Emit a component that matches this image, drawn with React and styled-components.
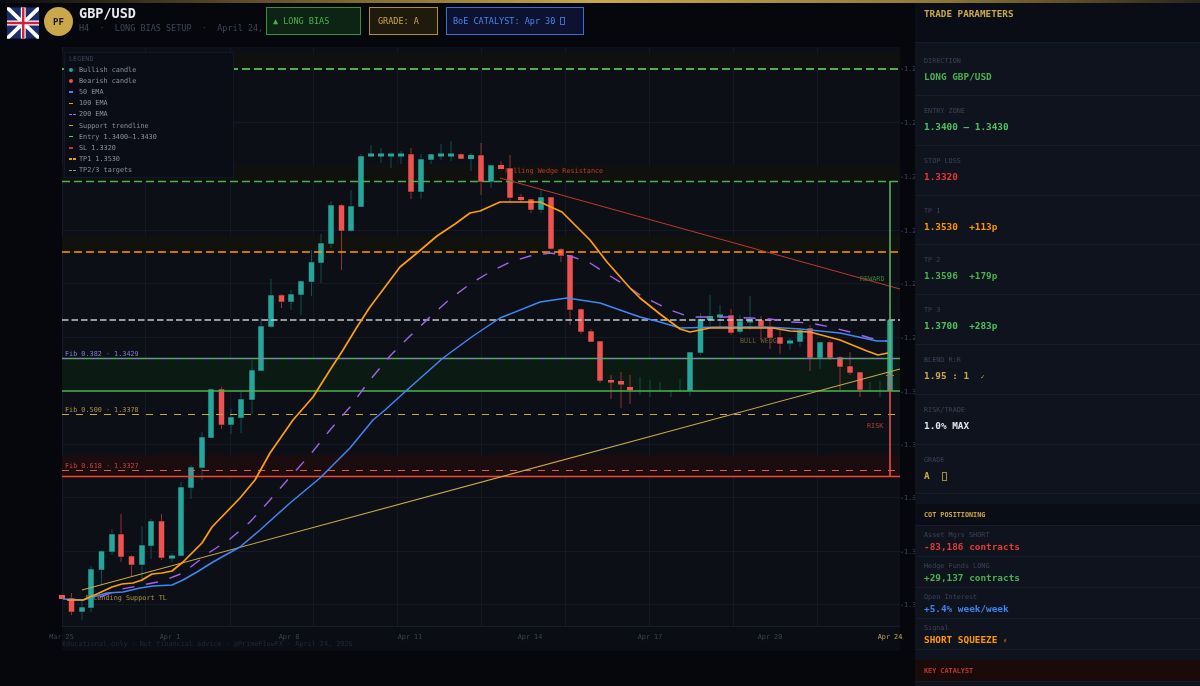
import React from "react";
import styled, { createGlobalStyle } from "styled-components";

const MONO = `"DejaVu Sans Mono", "Liberation Mono", monospace`;

const Global = createGlobalStyle`
  html, body { margin: 0; padding: 0; background: #05070d; }
  * { box-sizing: border-box; }
`;

const Page = styled.div`
  width: 1200px; height: 686px; overflow: hidden; display: flex; flex-direction: column;
  background: #05070d; font-family: ${MONO}; filter: blur(0.3px);
`;
const GoldBar = styled.div`
  height: 3px; flex: none;
  background: linear-gradient(90deg, #0a0c10 0%, #6d5c2e 25%, #c9a84c 50%, #8f7838 78%, #2a261c 100%);
`;
const Body = styled.div`display: flex; flex: 1; min-height: 0;`;
const Main = styled.main`width: 915px; flex: none; overflow: hidden; display: flex; flex-direction: column;`;
const Header = styled.header`height: 44px; flex: none; display: flex; align-items: flex-start; padding: 4px 0 0 6.5px;`;
const Flag = styled.svg`width: 32.5px; height: 32px; flex: none; display: block;`;
const Coin = styled.div`
  width: 29px; height: 29px; margin-left: 5px; flex: none; border-radius: 50%; background: #c9a84c; color: #1a1405;
  font-size: 9px; font-weight: 700; display: flex; align-items: center; justify-content: center;
`;
const TitleBlock = styled.div`width: 187px; margin: -2px 0 0 6px; flex: none; white-space: pre;`;
const Title = styled.div`font-size: 13.5px; font-weight: 700; color: #e8eaf0; line-height: 16px;`;
const Sub = styled.div`font-size: 8.5px; color: #3f4759; line-height: 11px; margin-top: 1.5px;`;
const Badge = styled.div`
  height: 28px; width: ${p => p.$w}px; margin-right: ${p => p.$mr}px; flex: none; padding-left: ${p => p.$pl}px; padding-bottom: 1px;
  display: flex; align-items: center; white-space: pre; font-size: 8.5px;
  color: ${p => p.$color}; background: ${p => p.$bg}; border: 1px solid ${p => p.$border};
`;
const Tofu = styled.span`
  display: inline-block; width: 5px; height: ${p => p.$h}px; margin-left: ${p => p.$ml ?? 0}px; border: 1px solid currentColor;
  vertical-align: middle; opacity: 0.8;
`;

const ChartFrame = styled.div`position: relative; width: 915px; height: 604px; flex: none;`;
const ChartSvg = styled.svg`display: block; width: 915px; height: 604px;`;
const Label = styled.text`
  font-family: ${MONO}; font-size: 6.8px; fill: ${p => p.$color}; opacity: ${p => p.$op ?? 1};
  text-anchor: ${p => p.$anchor ?? "start"};
`;
const Legend = styled.aside`
  position: absolute; left: 64px; top: 5px; width: 170px; height: 126px; padding: 1px 0 0 4px;
  background: #0a0d15; border: 1px solid #131826;
`;
const LegendTitle = styled.div`font-size: 6.8px; line-height: 10px; color: #3a4256;`;
const LegendRow = styled.div`display: flex; align-items: center; height: 11.2px; font-size: 6.8px; color: #8a909c;`;
const LegendMark = styled.span`width: 10px; flex: none; display: flex; justify-content: flex-start; align-items: center;`;
const Dot = styled.i`width: 4px; height: 4px; border-radius: 50%; background: ${p => p.$color};`;
const Dash = styled.i`width: ${p => p.$dashed ? 7 : 4}px; height: 1.3px; background: ${p => p.$dashed
  ? `repeating-linear-gradient(90deg, ${p.$color} 0 3px, transparent 3px 4px)` : p.$color};`;
const Footnote = styled.div`position: absolute; left: 62px; top: 592px; font-size: 6.8px; line-height: 10px; color: #232838; white-space: pre;`;

const Side = styled.aside`flex: 1; background: #0f131d; display: flex; flex-direction: column; min-width: 0;`;
const SideHead = styled.div`
  height: 40px; flex: none; padding: 5px 9px 0; background: #0a0d16; border-bottom: 1px solid #171c2a;
  font-size: 9.3px; line-height: 11px; font-weight: 700; color: #c9a84c;
`;
const Param = styled.div`
  height: ${p => p.$h ?? 49.8}px; flex: none; padding: ${p => p.$pt ?? 10}px 9px 0; border-bottom: 1px solid #171c2a;
`;
const ParamLabel = styled.div`font-size: 6.8px; line-height: 10px; color: #3a4256;`;
const ParamValue = styled.div`font-size: 9.4px; line-height: 12px; margin-top: 5px; font-weight: 700; color: ${p => p.$color}; white-space: pre;`;
const SectionHead = styled.div`
  height: 22px; flex: none; margin-top: ${p => p.$mt}px; padding: 0 9px; display: flex; align-items: center;
  font-size: 6.8px; font-weight: 700; color: ${p => p.$color}; background: ${p => p.$bg}; border-bottom: 1px solid #171c2a;
`;
const CotRow = styled.div`height: 31px; flex: none; padding: 4px 9px 0; border-bottom: 1px solid #171c2a;`;
const CotValue = styled.div`font-size: 9.4px; line-height: 12px; margin-top: 1px; font-weight: 700; color: ${p => p.$color}; white-space: pre;`;
const SmallGlyph = styled.span`font-size: 7px; font-weight: 400;`;

const G = "#26a69a", R = "#ef5350";
// x-centre, body top y, body bottom y, wick high y, wick low y, colour
const candles = [
  [62,595,599,595,599,R],[71.5,598,612,593,615,R],[82,607,612,600,620,G],[91,569,608,566,612,G],[101.5,551,570,550,585,G],
  [112,534,552,529,555,G],[121,534,557,514,562,R],[131.5,556,565,555,576,R],[142,545,565,526,582,G],[151,521,546,519,559,G],
  [161.5,521,558,514,560,R],[172,555.5,558.5,553,562,G],[181,487,556,482,556,G],[191,467,488,465,499,G],[202,437,468,432,480,G],
  [211,389,438,388,438,G],[221.5,389,425,387,429,R],[231,417,425,409,434,G],[241,399,418,392,433,G],[252,370,400,360,414,G],
  [261,326,371,318,371,G],[271,295,327,279,328,G],[281.5,295,302,294,308,R],[291,294,302,290,310,G],[301,281,295,281,315,G],
  [311.5,262,282,250,296,G],[321,243,263,234,283,G],[331,205,244,201,248,G],[341.5,205,231,204,270,R],[351,206,231,190,232,G],
  [361,156,207,154,207,G],[371,153.5,156.5,145,157,G],[381,153.5,156.5,148,163,G],[391,153.5,156.5,154,168,G],[401,153.5,156.5,151,164,G],
  [411,154,192,148,199,R],[421,159,192,154,199,G],[431,154,160,154,164,G],[441,153.5,156.5,144,160,G],[451,153.5,156.5,141,161,G],
  [461,154,159,153,159,R],[471,155,159,153,171,G],[481,155,182,143,195,R],[491,165,182,165,188,G],[501,165,169,161,169,R],
  [510,168,198,155,202,R],[521,197,200,194,203,R],[531,199,210,199,213,R],[541,197,210,190,213,G],[551,197,249,197,250,R],
  [561,249,256,248,262,R],[570,255,310,255,325,R],[581,309,332,308,334,R],[591,331,342,329,342,R],[600,341,381,341,383,R],
  [611,380,382.5,375,399,R],[621,381,384.5,372,408,R],[630,387,390,375,404,R],
  [640,391,391,377,395,G],[650,391,391,380,397,G],[660,391,391,382,392,G],[671,391,391,390,397,G],[680,391,391,379,392,G],
  [690,352,391,352,396,G],[700.5,319,353,313,355,G],[710,316,320,295,325,G],[720,314.5,317.5,305,327,G],[731,315,333,309,335,R],
  [740,321,332,315,334,G],[750,319.5,322.5,296,330,G],[761,320,327,316,340,R],[770,327,338,320,349,R],[780,337,344,330,354,R],
  [790,340.5,343.5,338,350,G],[800,330,342,328,347,G],[810,328,358,325,371,R],[820,342,358,342,369,G],[830,342,358,340,360,R],
  [840,357,367,356,390,R],[850,366,373,352,375,R],[860,372,390,372,397,R],[870,391,391,382,392,G],[880,391,391,381,397,G],
  [890,320,391,320,391,G],
];

const ema100 = "67,600 83,600 97,594 112,587 122,584 133,583 142,580 152,574 162,573 172,571 183,562 202,543 212,527 240,498 255,480 270,453 293,420 313,397 330,370 343,350 357,327 370,307 385,287 400,267 417,253 437,236 455,224 470,213 480,211 500,202 540,202 562,212 590,240 607,262 630,288 640,298 660,314 680,329 690,332 710,328 740,328 773,328 790,331 810,332 840,340 867,351 878,355 888,353";
const ema50 = "63,599 83,600 93,597 107,593 123,592 140,588 153,586 172,585 183,580 197,572 213,562 240,547 260,530 290,503 320,478 350,448 373,420 385,410 407,390 443,358 473,336 500,318 540,302 567,298 600,303 640,317 660,322 680,328 720,327 767,327 800,329 840,333 877,341 888,341";
const ema200 = "100,597 122,589 163,581 183,573 210,552 230,539 250,522 270,500 290,477 310,455 330,430 350,407 370,380 390,356 410,336 430,317 450,299 470,284 490,272 510,262 530,256 550,253 570,256 590,263 610,276 630,288 640,295 670,310 690,317 710,317 730,317 750,318 770,319 790,322 810,323 830,327 850,332 870,338 887,341";

const vGrid = [145, 230, 313, 397, 481, 565, 649, 733, 817];
const ticks = [68.5, 122, 176, 230, 283, 337, 391, 444, 497.5, 551, 604.5];
const tickText = ticks.map((_, i) => (i < 6 ? "-1.2" : "-1.3"));
const dates = [["Mar 25", 61.5], ["Apr 1", 170], ["Apr 8", 289], ["Apr 11", 410], ["Apr 14", 530], ["Apr 17", 650], ["Apr 20", 770], ["Apr 24", 890]];

function Chart() {
  return (
    <ChartSvg viewBox="0 47 915 604">
      <rect x="62" y="47" width="838" height="604" fill="#0a0d13" />
      <rect x="62" y="47" width="838" height="579" fill="#0c0f16" />
      {vGrid.map(x => <line key={x} x1={x + 0.5} x2={x + 0.5} y1="47" y2="626" stroke="#141925" />)}
      {ticks.map(y => <line key={y} x1="62" x2="900" y1={Math.floor(y) + 0.5} y2={Math.floor(y) + 0.5} stroke="#141925" />)}
      <line x1="62.5" x2="62.5" y1="47" y2="626" stroke="#171c2a" />
      <line x1="62" x2="900" y1="626.5" y2="626.5" stroke="#171c2a" />
      {ticks.map((y, i) => <Label key={y} x="900" y={y + 2.5} $color="#3f4759">{tickText[i]}</Label>)}
      {dates.map(([t, x]) => <Label key={t} x={x} y="639" $anchor="middle" $color={t === "Apr 24" ? "#c9a84c" : "#3a4256"}>{t}</Label>)}

      <rect x="62" y="53" width="838" height="16" fill="#10110e" />
      <rect x="62" y="165" width="838" height="16" fill="#10110e" />
      <rect x="62" y="236" width="838" height="16" fill="#11110d" />
      <rect x="62" y="358" width="838" height="33" fill="#0c1a14" />
      <rect x="62" y="455" width="838" height="21" fill="#1b0c0f" />

      <Label x="505" y="173" $color="#c0392b">Falling Wedge Resistance</Label>
      <Label x="85" y="600" $color="#c9a84c" $op="0.85">Ascending Support TL</Label>
      <Label x="740" y="343" $color="#c9a84c" $op="0.5">BULL WEDGE</Label>
      <Label x="860" y="281" $color="#4caf50" $op="0.7">REWARD</Label>
      <Label x="867" y="428" $color="#ef5350" $op="0.7">RISK</Label>
      <Label x="65" y="356" $color="#7b7fd8">Fib 0.382 · 1.3429</Label>
      <Label x="65" y="412" $color="#c9a84c" $op="0.85">Fib 0.500 · 1.3378</Label>
      <Label x="65" y="468" $color="#ef5350" $op="0.8">Fib 0.618 · 1.3327</Label>

      {candles.map(([x, t, b, h, l, c], i) => (
        <line key={"w" + i} x1={x} x2={x} y1={h} y2={l} stroke={c === G ? "#0f514c" : "#8f3533"} />
      ))}
      {candles.map(([x, t, b, h, l, c], i) => (b - t > 0 ? (
        <rect key={"c" + i} x={x - 3} y={t} width="6" height={b - t} fill={c} stroke={b - t > 4 ? "#0a0d13" : "none"} strokeWidth="0.5" />
      ) : null))}

      <line x1="62" x2="900" y1="69" y2="69" stroke="#4caf50" strokeWidth="1.8" strokeDasharray="8 4" />
      <line x1="62" x2="900" y1="181.5" y2="181.5" stroke="#4caf50" strokeWidth="1.5" strokeDasharray="8 4" />
      <line x1="62" x2="900" y1="252" y2="252" stroke="#ff9800" strokeWidth="1.6" strokeDasharray="8 4" />
      <line x1="62" x2="900" y1="320" y2="320" stroke="#c4c8cf" strokeWidth="1.6" strokeDasharray="6.5 3" />
      <line x1="62" x2="900" y1="358.5" y2="358.5" stroke="#4caf50" strokeWidth="1.5" />
      <line x1="62" x2="900" y1="358.5" y2="358.5" stroke="#8c74e0" strokeWidth="1" strokeDasharray="8 6" />
      <line x1="62" x2="900" y1="391" y2="391" stroke="#4caf50" strokeWidth="1.6" />
      <line x1="62" x2="900" y1="414.5" y2="414.5" stroke="#c9a84c" strokeWidth="1" strokeDasharray="7 7" />
      <line x1="62" x2="900" y1="470.5" y2="470.5" stroke="#ef5350" strokeWidth="1" strokeDasharray="7 7" />
      <line x1="62" x2="900" y1="476.5" y2="476.5" stroke="#f44336" strokeWidth="1.7" />

      <polyline points="82,590 900,369" fill="none" stroke="#c9a84c" strokeWidth="1.1" />
      <polyline points="500,178 900,289" fill="none" stroke="#c0392b" strokeWidth="1" />
      <polyline points={ema200} fill="none" stroke="#a463e8" strokeWidth="1.4" strokeDasharray="12 12" strokeLinejoin="round" />
      <polyline points={ema50} fill="none" stroke="#4287f5" strokeWidth="1.5" strokeLinejoin="round" />
      <polyline points={ema100} fill="none" stroke="#ff9f0a" strokeWidth="1.7" strokeLinejoin="round" />

      <line x1="890" x2="890" y1="181" y2="375" stroke="#5fb862" strokeWidth="1.5" />
      <line x1="890" x2="890" y1="375" y2="476" stroke="#ef5350" strokeWidth="1.5" />
      <line x1="886" x2="894" y1="375.5" y2="375.5" stroke="#ef5350" />
    </ChartSvg>
  );
}

const legend = [
  ["dot", G, "Bullish candle"], ["dot", R, "Bearish candle"], ["line", "#4287f5", "50 EMA"], ["line", "#ff9f0a", "100 EMA"],
  ["dash", "#8c74e0", "200 EMA"], ["line", "#c9a84c", "Support trendline"], ["line", "#5fd068", "Entry 1.3400–1.3430"],
  ["line", "#c0392b", "SL 1.3320"], ["dash", "#ff9800", "TP1 1.3530"], ["dash", "#6fae72", "TP2/3 targets"],
];

const params = [
  ["DIRECTION", "LONG GBP/USD", "#4caf50", 53, 13],
  ["ENTRY ZONE", "1.3400 — 1.3430", "#4fc160"],
  ["STOP LOSS", "1.3320", "#e53935"],
  ["TP 1", "1.3530  +113p", "#ff9800"],
  ["TP 2", "1.3596  +179p", "#4caf50"],
  ["TP 3", "1.3700  +283p", "#4fc160"],
  ["BLEND R:R", <>1.95 : 1  <SmallGlyph>✓</SmallGlyph></>, "#c9a84c"],
  ["RISK/TRADE", "1.0% MAX", "#e2e5ec"],
  ["GRADE", <>A  <Tofu $h={9} $ml={1} /></>, "#c9a84c"],
];
const cot = [
  ["Asset Mgrs SHORT", "-83,186 contracts", "#e53935"],
  ["Hedge Funds LONG", "+29,137 contracts", "#4caf50"],
  ["Open Interest", "+5.4% week/week", "#3f83ee"],
  ["Signal", <>SHORT SQUEEZE <SmallGlyph>⚡</SmallGlyph></>, "#ff9800"],
];

export default function App() {
  return (
    <Page>
      <Global />
      <GoldBar />
      <Body>
        <Main>
          <Header>
            <Flag viewBox="0 0 60 58">
              <clipPath id="fc"><rect width="60" height="58" /></clipPath>
              <g clipPath="url(#fc)">
                <rect width="60" height="58" fill="#1c2d6b" />
                <path d="M0 0L60 58M60 0L0 58" stroke="#fff" strokeWidth="7" />
                <path d="M30 0V58M0 29H60" stroke="#fff" strokeWidth="9" />
                <path d="M30 0V58M0 29H60" stroke="#d0213a" strokeWidth="4.5" />
              </g>
            </Flag>
            <Coin>PF</Coin>
            <TitleBlock>
              <Title>GBP/USD</Title>
              <Sub>{"H4  ·  LONG BIAS SETUP  ·  April 24,"}</Sub>
            </TitleBlock>
            <Badge $w={95} $mr={8} $pl={6} $color="#4caf50" $bg="#0d2414" $border="#3b8f40">▲ LONG BIAS</Badge>
            <Badge $w={69} $mr={8} $pl={8} $color="#c9a84c" $bg="#1f1a0c" $border="#b08f3c">GRADE: A</Badge>
            <Badge $w={138} $mr={0} $pl={6} $color="#4a86e8" $bg="#0c1230" $border="#3a70cc">BoE CATALYST: Apr 30 <Tofu $h={8} /></Badge>
          </Header>
          <ChartFrame>
            <Chart />
            <Legend>
              <LegendTitle>LEGEND</LegendTitle>
              {legend.map(([k, c, t]) => (
                <LegendRow key={t}>
                  <LegendMark>
                    {k === "dot" ? <Dot $color={c} /> : <Dash $color={c} $dashed={k === "dash"} />}
                  </LegendMark>
                  {t}
                </LegendRow>
              ))}
            </Legend>
            <Footnote>Educational only · Not financial advice · @PrimeFlowFX · April 24, 2026</Footnote>
          </ChartFrame>
        </Main>
        <Side>
          <SideHead>TRADE PARAMETERS</SideHead>
          {params.map(([l, v, c, h, pt]) => (
            <Param key={l} $h={h} $pt={pt}>
              <ParamLabel>{l}</ParamLabel>
              <ParamValue $color={c}>{v}</ParamValue>
            </Param>
          ))}
          <SectionHead $mt={10} $color="#c9a84c" $bg="#0a0d16">COT POSITIONING</SectionHead>
          {cot.map(([l, v, c]) => (
            <CotRow key={l}>
              <ParamLabel>{l}</ParamLabel>
              <CotValue $color={c}>{v}</CotValue>
            </CotRow>
          ))}
          <SectionHead $mt={10} $color="#c0392b" $bg="#1a0a0a">KEY CATALYST</SectionHead>
        </Side>
      </Body>
    </Page>
  );
}
